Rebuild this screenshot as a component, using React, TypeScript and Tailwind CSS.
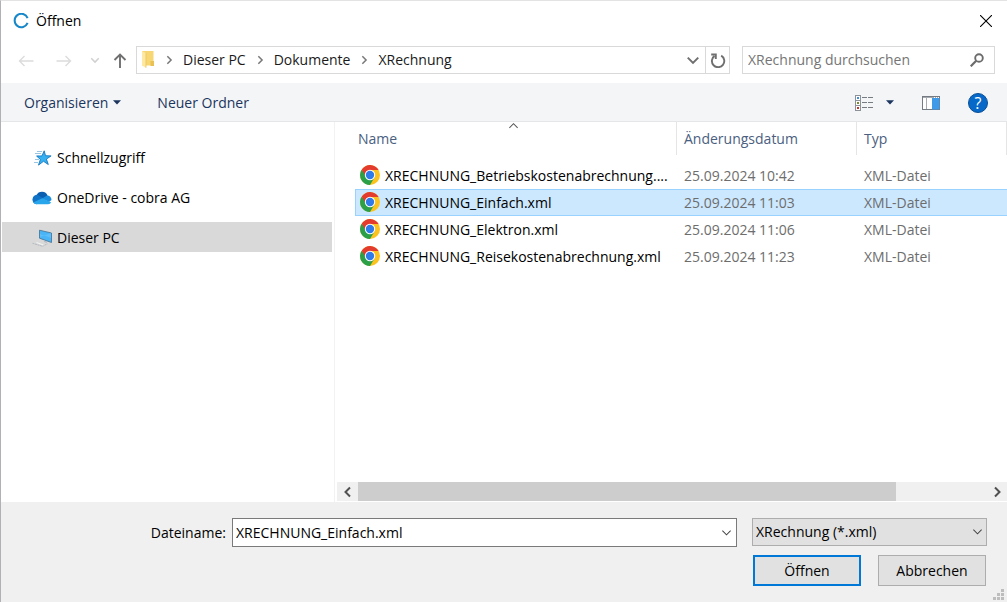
import { useState } from 'react';
import type { ReactNode } from 'react';

type FileEntry = {
  name: string;
  label?: string;
  modified: string;
  type: string;
};

const FILES: FileEntry[] = [
  {
    name: 'XRECHNUNG_Betriebskostenabrechnung.xml',
    label: 'XRECHNUNG_Betriebskostenabrechnung....',
    modified: '25.09.2024 10:42',
    type: 'XML-Datei',
  },
  { name: 'XRECHNUNG_Einfach.xml', modified: '25.09.2024 11:03', type: 'XML-Datei' },
  { name: 'XRECHNUNG_Elektron.xml', modified: '25.09.2024 11:06', type: 'XML-Datei' },
  { name: 'XRECHNUNG_Reisekostenabrechnung.xml', modified: '25.09.2024 11:23', type: 'XML-Datei' },
];

const PATH = ['Dieser PC', 'Dokumente', 'XRechnung'];

// Generic chevron, one path per direction
function Chevron({ dir, size = 12, weight = 1.2 }: { dir: 'up' | 'down' | 'left' | 'right'; size?: number; weight?: number }) {
  const paths = {
    up: 'M1.5 8.5 6 4l4.5 4.5',
    down: 'M1.5 4 6 8.5 10.5 4',
    left: 'M8 1.5 3.5 6 8 10.5',
    right: 'M4 1.5 8.5 6 4 10.5',
  };
  return (
    <svg width={size} height={size} viewBox="0 0 12 12" fill="none" stroke="currentColor" strokeWidth={weight} aria-hidden="true">
      <path d={paths[dir]} />
    </svg>
  );
}

function Arrow({ dir }: { dir: 'left' | 'right' | 'up' }) {
  const paths = {
    left: 'M15.5 9H1.5M6.5 4 1.5 9l5 5',
    right: 'M.5 9h14M9.5 4l5 5-5 5',
    up: 'M8 16V2.500M2.500 8 8 2.500 13.500 8',
  };
  return (
    <svg width="16" height="16" viewBox="0 0 16 16" fill="none" stroke="currentColor" strokeWidth={dir === 'up' ? 1.9 : 1.4} aria-hidden="true">
      <path d={paths[dir]} />
    </svg>
  );
}

function Caret() {
  return (
    <svg width="8" height="5" viewBox="0 0 8 5" fill="#1b355e" aria-hidden="true">
      <path d="M0 .3h8L4 4.500z" />
    </svg>
  );
}

function AppIcon() {
  return (
    <svg width="16" height="16" viewBox="0 0 16 16" fill="none" aria-hidden="true">
      <path d="M14.600 5.100A6.700 6.700 0 1 0 14.600 9.900" stroke="#1687c9" strokeWidth="2" />
    </svg>
  );
}

function FolderIcon() {
  return (
    <svg width="14" height="18" viewBox="0 0 14 18" aria-hidden="true">
      <path d="M1 0h11.500v14.500H1z" fill="#f7d774" />
      <path d="M9.500 10H13v5H9.500z" fill="#e9c154" />
      <path d="M1 0l4 2.200V16.800L1 14.500z" fill="#ffe9a2" />
      <path d="M5 2.200V16.800" stroke="#e6bf55" strokeWidth=".7" />
    </svg>
  );
}

function RefreshIcon() {
  return (
    <svg width="16" height="16" viewBox="0 0 16 16" fill="none" stroke="#6f6f6f" strokeWidth="1.900" aria-hidden="true">
      <path d="M11.200 3.600A6.200 6.200 0 1 1 4.500 3.900" />
      <path d="M1.200 2.500h4.600v4.600" />
    </svg>
  );
}

function SearchIcon() {
  return (
    <svg width="14" height="14" viewBox="0 0 14 14" fill="none" stroke="#6b6b6b" aria-hidden="true">
      <circle cx="9" cy="5" r="3.800" strokeWidth="1.900" />
      <path d="M6.200 7.800.7 13.300" strokeWidth="2.200" />
    </svg>
  );
}

function ListViewIcon() {
  const marks = ['#3d8fd9', '#7a8b2b', '#c0392b'];
  return (
    <svg width="18" height="16" viewBox="0 0 18 16" fill="none" aria-hidden="true">
      {marks.map((color, i) => (
        <g key={color}>
          <rect x=".5" y={0.5 + i * 5} width="5" height="5" fill="#fff" stroke="#8d9299" />
          <rect x="2" y={2 + i * 5} width="2" height="2" fill={color} />
          <path d={`M7 ${2.5 + i * 5}h5M13 ${2.5 + i * 5}h5`} stroke="#777c83" />
        </g>
      ))}
    </svg>
  );
}

function PreviewPaneIcon() {
  return (
    <svg width="18" height="14" viewBox="0 0 18 14" aria-hidden="true">
      <rect x=".5" y=".5" width="17" height="13" fill="#fff" stroke="#757b83" />
      <path d="M1 1h16v1H1z" fill="#a7abb0" />
      <path d="M4.500 2v11" stroke="#a7abb0" />
      <path d="M10 2h7.500v11.500H10z" fill="#3f9be8" />
      <path d="M12 1.500h1M14 1.500h1M16 1.500h1" stroke="#fff" />
    </svg>
  );
}

function ChromeIcon() {
  return (
    <svg width="20" height="20" viewBox="0 0 20 20" className="mb-0.5 shrink-0" aria-hidden="true">
      <circle cx="10" cy="10" r="10" fill="#fcc31e" />
      <path d="M1.340 5A10 10 0 0 0 10 20l4.500-7.500L10 10z" fill="#2c9f49" />
      <path d="M10 5h8.660A10 10 0 0 0 1.700 4.500l4 7L10 10z" fill="#e33b2e" />
      <circle cx="10" cy="10" r="5.200" fill="#fff" />
      <circle cx="10" cy="10" r="4.200" fill="#2f7bea" />
    </svg>
  );
}

function QuickAccessIcon() {
  return (
    <svg width="20" height="16" viewBox="0 0 20 16" aria-hidden="true">
      <path d="M12.200.8l1.300 4.900 5.600.2-4.700 3.200 1.900 5.400-4.800-3.200-5 3.800 1.900-5.700-3.800-3.300 5.400-.2z" fill="#35b1f2" stroke="#1577be" strokeWidth=".9" />
      <path d="M5 1.500h5M3 3.500h6M5 5.500h2M3 9.500h4M2 12.500h4" stroke="#7fb6dd" strokeWidth=".8" />
    </svg>
  );
}

function OneDriveIcon() {
  return (
    <svg width="20" height="14" viewBox="0 0 20 14" aria-hidden="true">
      <path d="M4.500 4.200A6 6 0 0 1 15.600 4.700L11 8z" fill="#0a5fb0" />
      <path d="M4.500 13.200A4.500 4.500 0 1 1 5.800 3.900L13 8.500z" fill="#1173c7" />
      <path d="M10 7.500l5.200-3A4.400 4.400 0 0 1 19.500 9L17 11z" fill="#1b8fdf" />
      <path d="M1.200 11.600 10.300 7.200l8.900 4.300a3.700 3.700 0 0 1-3 1.800H4.500a4.400 4.400 0 0 1-3.300-1.700z" fill="#29a5ec" />
    </svg>
  );
}

function ComputerIcon() {
  return (
    <svg width="20" height="18" viewBox="0 0 20 18" aria-hidden="true">
      <path d="M7.500 1.200 19.500 4v9.500L7.500 9.200z" fill="#49b5f7" stroke="#426f90" strokeWidth=".8" />
      <path d="M8 8 19 3.900v5L8 5z" fill="#7dcdfc" opacity=".4" />
      <path d="M12 11.500v1.500l3 1v-1.500" fill="#b7bcc1" />
      <path d="M.5 14.300l10 3 5-2.500" fill="none" stroke="#b4b9be" strokeWidth="1" strokeDasharray="2 .6" />
      <path d="M4.500 13.500l7 2.500" stroke="#f4f5f6" strokeWidth="1" />
    </svg>
  );
}

function SizeGrip() {
  const dots = [[8, 0], [4, 4], [8, 4], [0, 8], [4, 8], [8, 8]];
  return (
    <svg width="11" height="11" viewBox="0 0 11 11" fill="#bdbdbd" className="absolute right-[3px] bottom-[2px]" aria-hidden="true">
      {dots.map(([x, y]) => (
        <rect key={`${x}-${y}`} x={x} y={y} width="3" height="3" />
      ))}
    </svg>
  );
}

function PlaceItem({ icon, label, active }: { icon: ReactNode; label: string; active?: boolean }) {
  return (
    <button
      type="button"
      className={`flex h-[30px] w-full items-center gap-[5px] pt-px pl-[30px] text-left ${active ? 'bg-[#d9d9d9]' : ''}`}
    >
      <span className="flex w-5 justify-center">{icon}</span>
      {label}
    </button>
  );
}

export default function App() {
  const [selected, setSelected] = useState('XRECHNUNG_Einfach.xml');
  const [search, setSearch] = useState('');

  return (
    <div className="flex min-h-screen flex-col border-t border-l border-t-[#e3e3e3] border-l-[#b0b0b5] bg-white font-['Open_Sans','Noto_Sans',sans-serif] text-[14px] leading-5 text-black">
      <header className="flex h-10 items-center gap-[7px] pl-3">
        <AppIcon />
        <h1 className="flex-1">Öffnen</h1>
        <button type="button" aria-label="Schließen" className="flex h-10 w-[42px] items-center justify-center">
          <svg width="12" height="12" viewBox="0 0 12 12" stroke="#000" strokeWidth="1.100">
            <path d="M0 0l12 12M12 0 0 12" />
          </svg>
        </button>
      </header>

      <nav className="flex h-[42px] items-center pr-3 pb-1 pl-[17px]" aria-label="Navigation">
        <button type="button" aria-label="Zurück" className="flex w-[38px] text-[#dcdcdc]"><Arrow dir="left" /></button>
        <button type="button" aria-label="Vorwärts" className="flex w-8 text-[#dcdcdc]"><Arrow dir="right" /></button>
        <button type="button" aria-label="Letzte Orte" className="flex w-6 pl-[2px] text-[#d0d0d0]"><Chevron dir="down" size={10} weight={1.8} /></button>
        <button type="button" aria-label="Nach oben" className="flex w-6 text-[#707070]"><Arrow dir="up" /></button>

        <div className="flex h-7 flex-1 border border-[#d9d9d9]">
          <div className="flex flex-1 items-center pl-1">
            <FolderIcon />
            {PATH.map((part) => (
              <div key={part} className="flex items-center">
                <span className="flex w-7 justify-center text-[#777]"><Chevron dir="right" size={10} weight={1.8} /></span>
                <button type="button" className="text-[#1a1a1a]">{part}</button>
              </div>
            ))}
          </div>
          <button type="button" aria-label="Vorherige Orte" className="flex w-6 items-center justify-center text-[#6f6f6f]">
            <Chevron dir="down" size={14} weight={1.7} />
          </button>
          <button type="button" aria-label="Aktualisieren" className="flex w-6 items-center justify-center border-l border-[#d9d9d9]">
            <RefreshIcon />
          </button>
        </div>

        <div className="ml-3 flex h-7 w-[253px] items-center border border-[#d9d9d9] pr-[10px] pl-[5px]">
          <input
            type="search"
            aria-label="XRechnung durchsuchen"
            placeholder="XRechnung durchsuchen"
            value={search}
            onChange={(e) => setSearch(e.target.value)}
            className="min-w-0 flex-1 outline-none placeholder:text-[#757575]"
          />
          <SearchIcon />
        </div>
      </nav>

      <div className="flex h-[39px] items-center border-b border-[#e5e6e8] bg-[#f4f5f7] pt-px pr-[19px] pl-[23px] text-[#1b355e]">
        <button type="button" className="flex items-center gap-[5px]">
          Organisieren
          <Caret />
        </button>
        <button type="button" className="ml-9">Neuer Ordner</button>
        <div className="ml-auto flex items-center">
          <button type="button" aria-label="Ansicht"><ListViewIcon /></button>
          <button type="button" aria-label="Weitere Optionen" className="ml-[13px]"><Caret /></button>
          <button type="button" aria-label="Vorschaufenster" className="ml-7"><PreviewPaneIcon /></button>
          <button
            type="button"
            aria-label="Hilfe"
            className="ml-7 flex size-5 items-center justify-center rounded-full border border-[#0a4f97] bg-[#0669c9] text-base text-white"
          >
            ?
          </button>
        </div>
      </div>

      <main className="flex flex-1">
        <aside className="flex w-1/3 max-w-[334px] flex-col gap-[10px] border-r border-[#f2f2f2] pt-5 pr-[2px] pl-px">
          <PlaceItem icon={<QuickAccessIcon />} label="Schnellzugriff" />
          <PlaceItem icon={<OneDriveIcon />} label="OneDrive - cobra AG" />
          <PlaceItem icon={<ComputerIcon />} label="Dieser PC" active />
        </aside>

        <section className="flex min-w-0 flex-1 flex-col">
          <div className="flex-1 pl-5">
            <table className="w-full table-fixed border-separate border-spacing-0">
              <colgroup>
                <col />
                <col className="w-[180px]" />
                <col className="w-[150px]" />
              </colgroup>
              <thead>
                <tr className="h-[33px] text-left text-[#4a6080]">
                  <th className="relative border-r border-[#e5e5e5] pl-[3px] font-normal" aria-sort="ascending">
                    <span className="absolute -top-0.5 left-1/2 -ml-2 text-[#555]"><Chevron dir="up" size={11} weight={1.1} /></span>
                    Name
                  </th>
                  <th className="border-r border-[#e5e5e5] pl-[7px] font-normal">Änderungsdatum</th>
                  <th className="border-r border-[#e5e5e5] pl-[7px] font-normal">Typ</th>
                </tr>
              </thead>
              <tbody className="before:block before:h-[7px]">
                {FILES.map((file) => {
                  const active = file.name === selected;
                  const cell = active ? 'border-y border-[#99d1ff] bg-[#cce8ff]' : 'border-y border-transparent';
                  return (
                    <tr key={file.name} className="h-[27px] text-[#6d6d6d]" onClick={() => setSelected(file.name)}>
                      <td className={`${cell} ${active ? 'border-l pl-1' : 'pl-[5px]'}`}>
                        <div className="flex items-center gap-[5px] whitespace-nowrap text-black">
                          <ChromeIcon />
                          {file.label ?? file.name}
                        </div>
                      </td>
                      <td className={`${cell} pl-[7px]`}>{file.modified}</td>
                      <td className={`${cell} pl-[7px]`}>{file.type}</td>
                    </tr>
                  );
                })}
              </tbody>
            </table>
          </div>

          <div className="mb-px ml-[2px] flex h-[19px] bg-[#f0f0f0] text-[#505050]">
            <button type="button" aria-label="Nach links" className="flex w-[21px] items-center justify-center">
              <Chevron dir="left" size={12} weight={2} />
            </button>
            <div className="flex-1">
              <div className="h-full w-6/7 bg-[#cdcdcd]" />
            </div>
            <button type="button" aria-label="Nach rechts" className="flex w-[21px] items-center justify-center">
              <Chevron dir="right" size={12} weight={2} />
            </button>
          </div>
        </section>
      </main>

      <footer className="relative flex h-[100px] flex-col gap-2 bg-[#f0f0f0] pt-4 pr-5">
        <div className="flex">
          <label htmlFor="filename" className="w-[231px] pt-[5px] pr-[6px] text-right">Dateiname:</label>
          <div className="flex h-[29px] flex-1 border border-[#7a7a7a] bg-white">
            <input
              id="filename"
              value={selected}
              onChange={(e) => setSelected(e.target.value)}
              className="min-w-0 flex-1 pl-[3px] outline-none"
            />
            <button type="button" aria-label="Zuletzt verwendet" className="flex w-5 items-center justify-center text-[#444]">
              <Chevron dir="down" size={11} weight={1.1} />
            </button>
          </div>
          <div className="relative ml-[15px] h-7 w-[235px]">
            <select aria-label="Dateityp" className="h-full w-full appearance-none border border-[#adadad] bg-[#e1e1e1] pl-[3px]">
              <option>XRechnung (*.xml)</option>
            </select>
            <span className="pointer-events-none absolute top-2 right-1 text-[#444]">
              <Chevron dir="down" size={11} weight={1.1} />
            </span>
          </div>
        </div>
        <div className="flex justify-end gap-[17px] pr-px">
          <button type="button" className="h-[31px] w-[108px] border-2 border-[#0078d7] bg-[#e1e1e1]">Öffnen</button>
          <button type="button" className="h-[31px] w-[108px] border border-[#adadad] bg-[#e1e1e1]">Abbrechen</button>
        </div>
        <SizeGrip />
      </footer>
    </div>
  );
}
